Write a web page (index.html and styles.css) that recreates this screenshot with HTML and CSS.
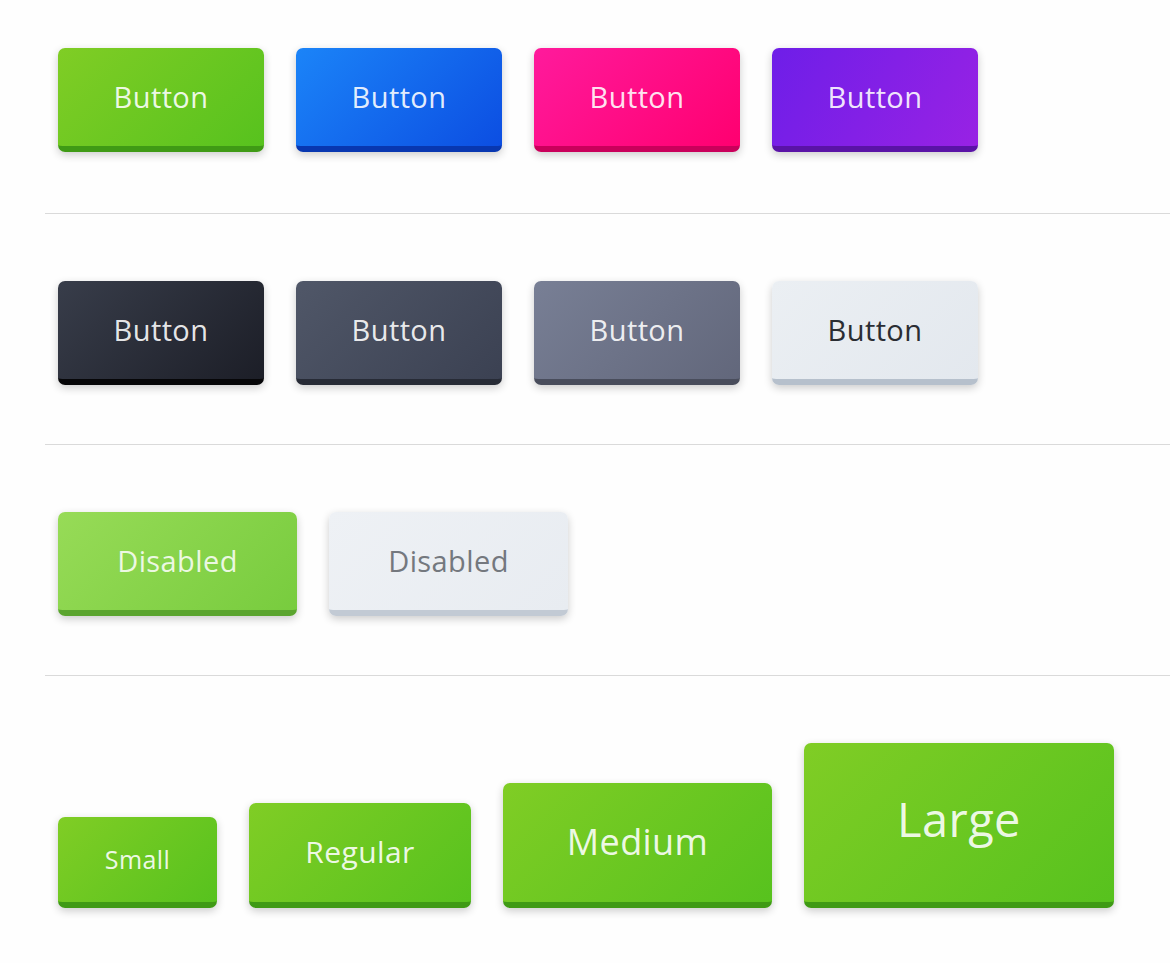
FILE: index.html
```html
<!DOCTYPE html>
<html lang="en">
<head>
    <meta charset="UTF-8" />
    <meta name="viewport" content="width=device-width, initial-scale=1.0" />
    <title>Buttons</title>
    <link rel="stylesheet" href="styles.css">
</head>
<body>
    <div class="page">
        <section class="row">
            <button class="btn btn-green">Button</button>
            <button class="btn btn-blue">Button</button>
            <button class="btn btn-pink">Button</button>
            <button class="btn btn-purple">Button</button>
        </section>
        <section class="row">
            <button class="btn btn-dark">Button</button>
            <button class="btn btn-slate">Button</button>
            <button class="btn btn-gray">Button</button>
            <button class="btn btn-light">Button</button>
        </section>
        <section class="row">
            <button class="btn btn-wide btn-green" disabled>Disabled</button>
            <button class="btn btn-wide btn-light" disabled>Disabled</button>
        </section>
        <section class="row row-sizes">
            <button class="btn btn-green btn-sm">Small</button>
            <button class="btn btn-green btn-reg">Regular</button>
            <button class="btn btn-green btn-md">Medium</button>
            <button class="btn btn-green btn-lg">Large</button>
        </section>
    </div>
</body>
</html>
```

FILE: styles.css
```css
body {
    margin: 0;
    background-color: #fefefe;
    font-family: "Open Sans", "Noto Sans", sans-serif;
}
.page {
    margin-left: 45px;
}
.row {
    display: flex;
    align-items: flex-end;
    gap: 32px;
    padding: 67px 0 59px 13px;
    border-bottom: 1px solid #dadada;
}
.row:first-child {
    padding-top: 48px;
    padding-bottom: 61px;
}
.row:last-child {
    border-bottom: none;
    padding-bottom: 40px;
}
.btn {
    box-sizing: border-box;
    width: 206px;
    height: 104px;
    padding: 0 0 2px;
    border: none;
    border-bottom: 6px solid;
    border-radius: 7px;
    font-family: inherit;
    font-size: 29px;
    letter-spacing: 0.4px;
    color: rgba(255, 255, 255, 0.9);
    box-shadow: 0 3px 8px rgba(0, 0, 0, 0.2);
    cursor: pointer;
}
.btn-wide {
    width: 239px;
}
.btn-green {
    background: linear-gradient(135deg, #80cd25, #57c21e);
    border-color: #3f9a15;
}
.btn-blue {
    background: linear-gradient(135deg, #1b84f8, #0c4ee2);
    border-color: #0837b0;
}
.btn-pink {
    background: linear-gradient(135deg, #ff1a9c, #ff0070);
    border-color: #c9005b;
}
.btn-purple {
    background: linear-gradient(120deg, #6e1ee8, #9822e4);
    border-color: #5a13a6;
}
.btn-dark {
    background: linear-gradient(135deg, #383d4a, #1c1e27);
    border-color: #060608;
}
.btn-slate {
    background: linear-gradient(135deg, #505768, #3b4152);
    border-color: #272b36;
}
.btn-gray {
    background: linear-gradient(135deg, #787f95, #62677b);
    border-color: #494d5c;
}
.btn-light {
    background: linear-gradient(135deg, #ebeff3, #e3e8ee);
    border-color: #b6c0cc;
    color: #2a2d33;
}
.btn-green:disabled {
    background: linear-gradient(135deg, #97db57, #78cc3e);
    border-color: #5ba52f;
    color: rgba(255, 255, 255, 0.85);
}
.btn-light:disabled {
    background: linear-gradient(135deg, #eef1f5, #e8ecf1);
    border-color: #c2cad4;
    color: #74787e;
}
.btn-sm {
    width: 159px;
    height: 91px;
    font-size: 25px;
}
.btn-reg {
    width: 222px;
    height: 105px;
    font-size: 30px;
}
.btn-md {
    width: 269px;
    height: 125px;
    font-size: 36px;
}
.btn-lg {
    width: 310px;
    height: 165px;
    padding-bottom: 8px;
    font-size: 47px;
}
```
